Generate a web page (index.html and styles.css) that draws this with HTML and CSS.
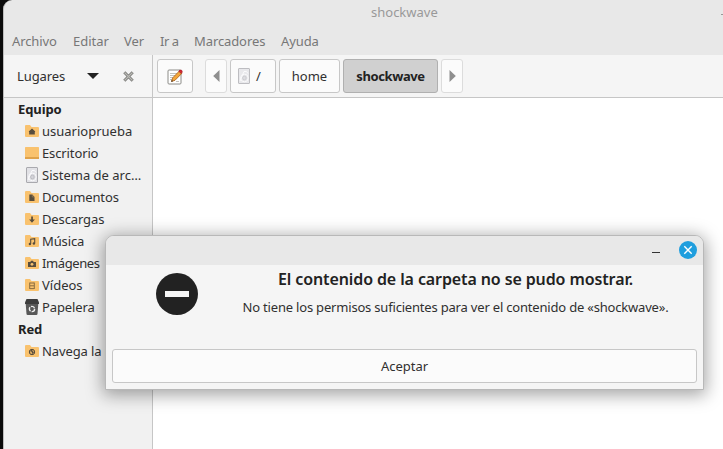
FILE: index.html
```html
<!DOCTYPE html>
<html lang="es">
<head>
<meta charset="utf-8">
<title>shockwave</title>
<link rel="stylesheet" href="styles.css">
</head>
<body>
<svg class="defs" width="0" height="0" aria-hidden="true">
  <symbol id="folder" viewBox="0 0 14 12"><path fill="#f9c26e" d="M0 1q0-1 1-1h4l1.500 2H13q1 0 1 1v8q0 1-1 1H1q-1 0-1-1z"/></symbol>
  <symbol id="disk" viewBox="0 0 12 16"><rect x=".5" y=".5" width="11" height="15" rx=".5" fill="#e2e2e6" stroke="#a9a9ae"/><circle cx="6.400" cy="10" r="3.800" fill="#dcdce0" stroke="#fafafc"/><path d="M2 13 6 3.500q3-1 4 2" fill="none" stroke="#fafafc"/><circle cx="6.400" cy="10" r="1.800" fill="#d5d5da" stroke="#b8b8be" stroke-width=".8"/></symbol>
</svg>
<div class="window">
  <header class="titlebar"><span class="title">shockwave</span><i class="win-min"></i></header>
  <nav class="menu"><span class="m1">Archivo</span><span class="m2">Editar</span><span class="m3">Ver</span><span class="m4">Ir a</span><span class="m5">Marcadores</span><span class="m6">Ayuda</span></nav>
  <div class="toolbar">
    <div class="places-head">
      <span class="places-label">Lugares</span>
      <svg class="drop" width="12" height="6" viewBox="0 0 12 6"><path fill="#222" d="M0 0h12L6 6z"/></svg>
      <svg class="close-places" width="11" height="11" viewBox="0 0 11 11"><path d="M1.300 1.300l8.400 8.400M9.700 1.300 1.300 9.700" stroke="#7b7b79" stroke-width="3"/><path d="M1.500 1.500l8 8M9.500 1.500l-8 8" stroke="#b9b9b4" stroke-width="1.100"/></svg>
    </div>
    <div class="path">
      <button class="btn edit"><svg width="16" height="17" viewBox="0 0 16 17"><rect x="1" y="2" width="13" height="14" rx="1" fill="#fff" stroke="#8c8c88"/><path d="M3 5.500h7M3 7.500h6M3 9.500h4M3 11.500h3M9 13.500h3" stroke="#c2c2be"/><path d="M4.500 13.500l1.100-3.600L12.400 3l2.400 2.400L8 12.300z" fill="#f3a63a" stroke="#a45c16" stroke-width=".8"/><path d="M4.300 13.700l.5-1.700 1.200 1.200z" fill="#222"/><path d="M11.800 3.200l1.100-1.100q2.500-.6 2.400 2l-1.200 1.400z" fill="#d42a35" stroke="#a5101d" stroke-width=".6"/></svg></button>
      <button class="btn arrow prev"><svg width="7" height="12" viewBox="0 0 7 12"><path fill="#8e8e8e" d="M6.500 0v12L.2 6z"/></svg></button>
      <button class="btn root"><svg width="12" height="16"><use href="#disk"/></svg><span>/</span></button>
      <button class="btn home"><span>home</span></button>
      <button class="btn current"><span>shockwave</span></button>
      <button class="btn arrow"><svg width="7" height="12" viewBox="0 0 7 12"><path fill="#8e8e8e" d="M.5 0v12L6.800 6z"/></svg></button>
    </div>
  </div>
  <div class="content">
    <aside class="sidebar">
      <h2>Equipo</h2>
      <p><svg width="14" height="16" viewBox="0 0 14 16"><use href="#folder" y="2" width="14" height="12"/><path d="M3.700 8.500 7 5.500l3.300 3-.5.500v2.500H4.200V9z" fill="#584d3d"/></svg><span>usuarioprueba</span></p>
      <p><svg width="14" height="16" viewBox="0 0 14 16"><rect y="2" width="14" height="12" rx=".6" fill="#f9c26e"/><path d="M0 12h14v2H0z" fill="#dfa24b"/></svg><span class="tight">Escritorio</span></p>
      <p><svg width="14" height="16" viewBox="0 0 14 16"><use href="#disk" x="1" width="12" height="16"/></svg><span>Sistema de arc…</span></p>
      <p><svg width="14" height="16" viewBox="0 0 14 16"><use href="#folder" y="2" width="14" height="12"/><path d="M4.300 5.500h3L9.500 8v4H4.300z" fill="#584d3d"/><path d="M7.300 5.500V8h2.200" fill="none" stroke="#b48e56" stroke-width=".5"/></svg><span class="tight">Documentos</span></p>
      <p><svg width="14" height="16" viewBox="0 0 14 16"><use href="#folder" y="2" width="14" height="12"/><path d="M6.200 5.500h1.700v3h2L7 11.700 4.100 8.500h2.100z" fill="#584d3d"/></svg><span class="tight">Descargas</span></p>
      <p><svg width="14" height="16" viewBox="0 0 14 16"><use href="#folder" y="2" width="14" height="12"/><path d="M5.700 10.800V6.300l4-.6v4.600" fill="none" stroke="#584d3d" stroke-width="1.100"/><circle cx="4.900" cy="11" r="1.200" fill="#584d3d"/><circle cx="8.900" cy="10.500" r="1.200" fill="#584d3d"/></svg><span class="tight">Música</span></p>
      <p><svg width="14" height="16" viewBox="0 0 14 16"><use href="#folder" y="2" width="14" height="12"/><path d="M3 7h2.300L6 5.700h2L8.700 7H11v5H3z" fill="#584d3d"/><circle cx="7" cy="9.300" r="1.400" fill="#f9c26e"/></svg><span class="tighter">Imágenes</span></p>
      <p><svg width="14" height="16" viewBox="0 0 14 16"><use href="#folder" y="2" width="14" height="12"/><path d="M4.700 5.500v6.500M9.300 5.500v6.500M5 6h4M5 8.800h4M5 11.600h4" stroke="#8a6d40" fill="none"/></svg><span>Vídeos</span></p>
      <p><svg width="14" height="16" viewBox="0 0 14 16"><path d="M.6 3.500h12.800L12.500 15q-.1 1-1.200 1H2.700Q1.600 16 1.500 15z" fill="#585858"/><path d="M1.500 0h11L14 3.500V5H0V3.500z" fill="#3d3d3d"/><circle cx="7" cy="10" r="2.600" fill="none" stroke="#f0f0f0" stroke-width="1.400" stroke-dasharray="4.400 1.040"/></svg><span class="tight">Papelera</span></p>
      <h2>Red</h2>
      <p><svg width="14" height="16" viewBox="0 0 14 16"><use href="#folder" y="2" width="14" height="12"/><circle cx="7" cy="9" r="2.700" fill="#d8a75f" stroke="#584d3d" stroke-width="1"/><path d="M7 6.500 5 8l2 1v2l2-1.500L7.500 8z" fill="#584d3d"/></svg><span class="tight">Navega la red</span></p>
    </aside>
    <main class="files"></main>
  </div>
</div>
<section class="dialog">
  <header class="dialog-bar"><i class="dialog-min"></i><svg width="18" height="18" viewBox="0 0 18 18"><circle cx="9" cy="9" r="9" fill="#1f9ede"/><path d="M5.300 5.300l7.400 7.400m0-7.400-7.400 7.400" stroke="#fff" stroke-width="1.400"/></svg></header>
  <div class="message">
    <svg width="42" height="42" viewBox="0 0 42 42"><circle cx="21" cy="21" r="21" fill="#222"/><path d="M9 18h24v6H9z" fill="#f5f5f5"/></svg>
    <div class="copy"><h1>El contenido de la carpeta no se pudo mostrar.</h1><p>No tiene los permisos suficientes para ver el contenido de «shockwave».</p></div>
  </div>
  <button class="accept"><span>Aceptar</span></button>
</section>
</body>
</html>
```
FILE: styles.css
```css
* { box-sizing: border-box; }
body { margin: 0; width: 723px; height: 449px; overflow: hidden; background: #0b0b0b; color: #303030; font: 13px/22px "Noto Sans", sans-serif; white-space: nowrap; }
h1, h2, p { margin: 0; }
button { padding: 0; font: inherit; color: inherit; }
svg { display: block; flex: none; }
.defs { position: absolute; }
.window { width: 720px; height: 449px; margin-left: 3px; border-left: 1px solid #bdbdbd; border-radius: 9px 0 0 0; overflow: hidden; background: #e8e8e8; display: flex; flex-direction: column; }
.titlebar { height: 30px; padding: 1px 0 0 367px; color: #999; display: flex; }
.title { width: 350px; }
.win-min { width: 2px; height: 1px; margin-top: 13px; background: #999; }
.menu { height: 25px; padding-left: 8px; display: flex; color: #777; }
.menu .m1 { width: 61px; letter-spacing: -.1px; }
.menu .m2 { width: 51px; }
.menu .m3 { width: 36px; }
.menu .m4 { width: 34px; letter-spacing: -.5px; }
.menu .m5 { width: 87px; letter-spacing: -.1px; }
.menu .m6 { letter-spacing: -.1px; }
.toolbar { height: 43px; background: #f5f5f5; border-bottom: 1px solid #c6c6c6; display: flex; }
.places-head { width: 149px; border-right: 1px solid #c6c6c6; display: flex; align-items: center; padding-left: 13px; }
.places-label { width: 70px; letter-spacing: -.1px; }
.close-places { margin-left: 24px; }
.path { display: flex; align-items: center; padding-left: 4px; gap: 3px; }
.btn { height: 34px; border: 1px solid #c7c7c7; border-radius: 3px; background: #fbfbfb; display: flex; align-items: center; justify-content: center; }
.edit { width: 36px; margin-right: 9px; }
.arrow { width: 22px; border-color: #dcdcdc; }
.root { width: 46px; justify-content: flex-start; padding-left: 7px; gap: 6px; }
.root svg { opacity: .75; }
.home { width: 61px; }
.current { width: 95px; background: #d0d0d0; border-color: #b0b0b0; font-weight: 700; color: #222; letter-spacing: -.4px; }
.content { flex: 1; display: flex; min-height: 0; }
.sidebar { width: 149px; border-right: 1px solid #c6c6c6; background: #f1f1f1; }
.sidebar h2 { height: 22px; padding-left: 14px; font-size: 13px; line-height: 22px; color: #222; letter-spacing: -.1px; }
.sidebar p { height: 22px; padding-left: 21px; display: flex; align-items: center; gap: 3px; }
.tight { letter-spacing: -.12px; }
.tighter { letter-spacing: -.4px; }
.files { flex: 1; background: #fff; }
.dialog { position: absolute; left: 105px; top: 235px; width: 599px; height: 155px; border: 1px solid #b8b8b8; border-radius: 9px 9px 0 0; background: #f5f5f5; box-shadow: 0 3px 17px 2px rgba(0,0,0,.36); overflow: hidden; }
.dialog-bar { height: 29px; background: #e8e8e8; display: flex; justify-content: flex-end; align-items: center; padding: 0 6px 1px 0; gap: 19px; }
.dialog-min { width: 8px; height: 1px; margin-top: 4px; background: #333; }
.message { height: 84px; padding: 8px 0 0 50px; display: flex; gap: 45px; }
.copy { width: 425px; margin-top: -5px; display: flex; flex-direction: column; align-items: center; }
.copy h1 { font-size: 16px; line-height: 22px; height: 28px; font-weight: 600; color: #222; letter-spacing: -.11px; }
.copy p { letter-spacing: -.19px; }
.accept { display: flex; align-items: center; justify-content: center; width: 585px; height: 34px; margin-left: 6px; border: 1px solid #c7c7c7; border-radius: 3px; background: #fbfbfb; }
```
